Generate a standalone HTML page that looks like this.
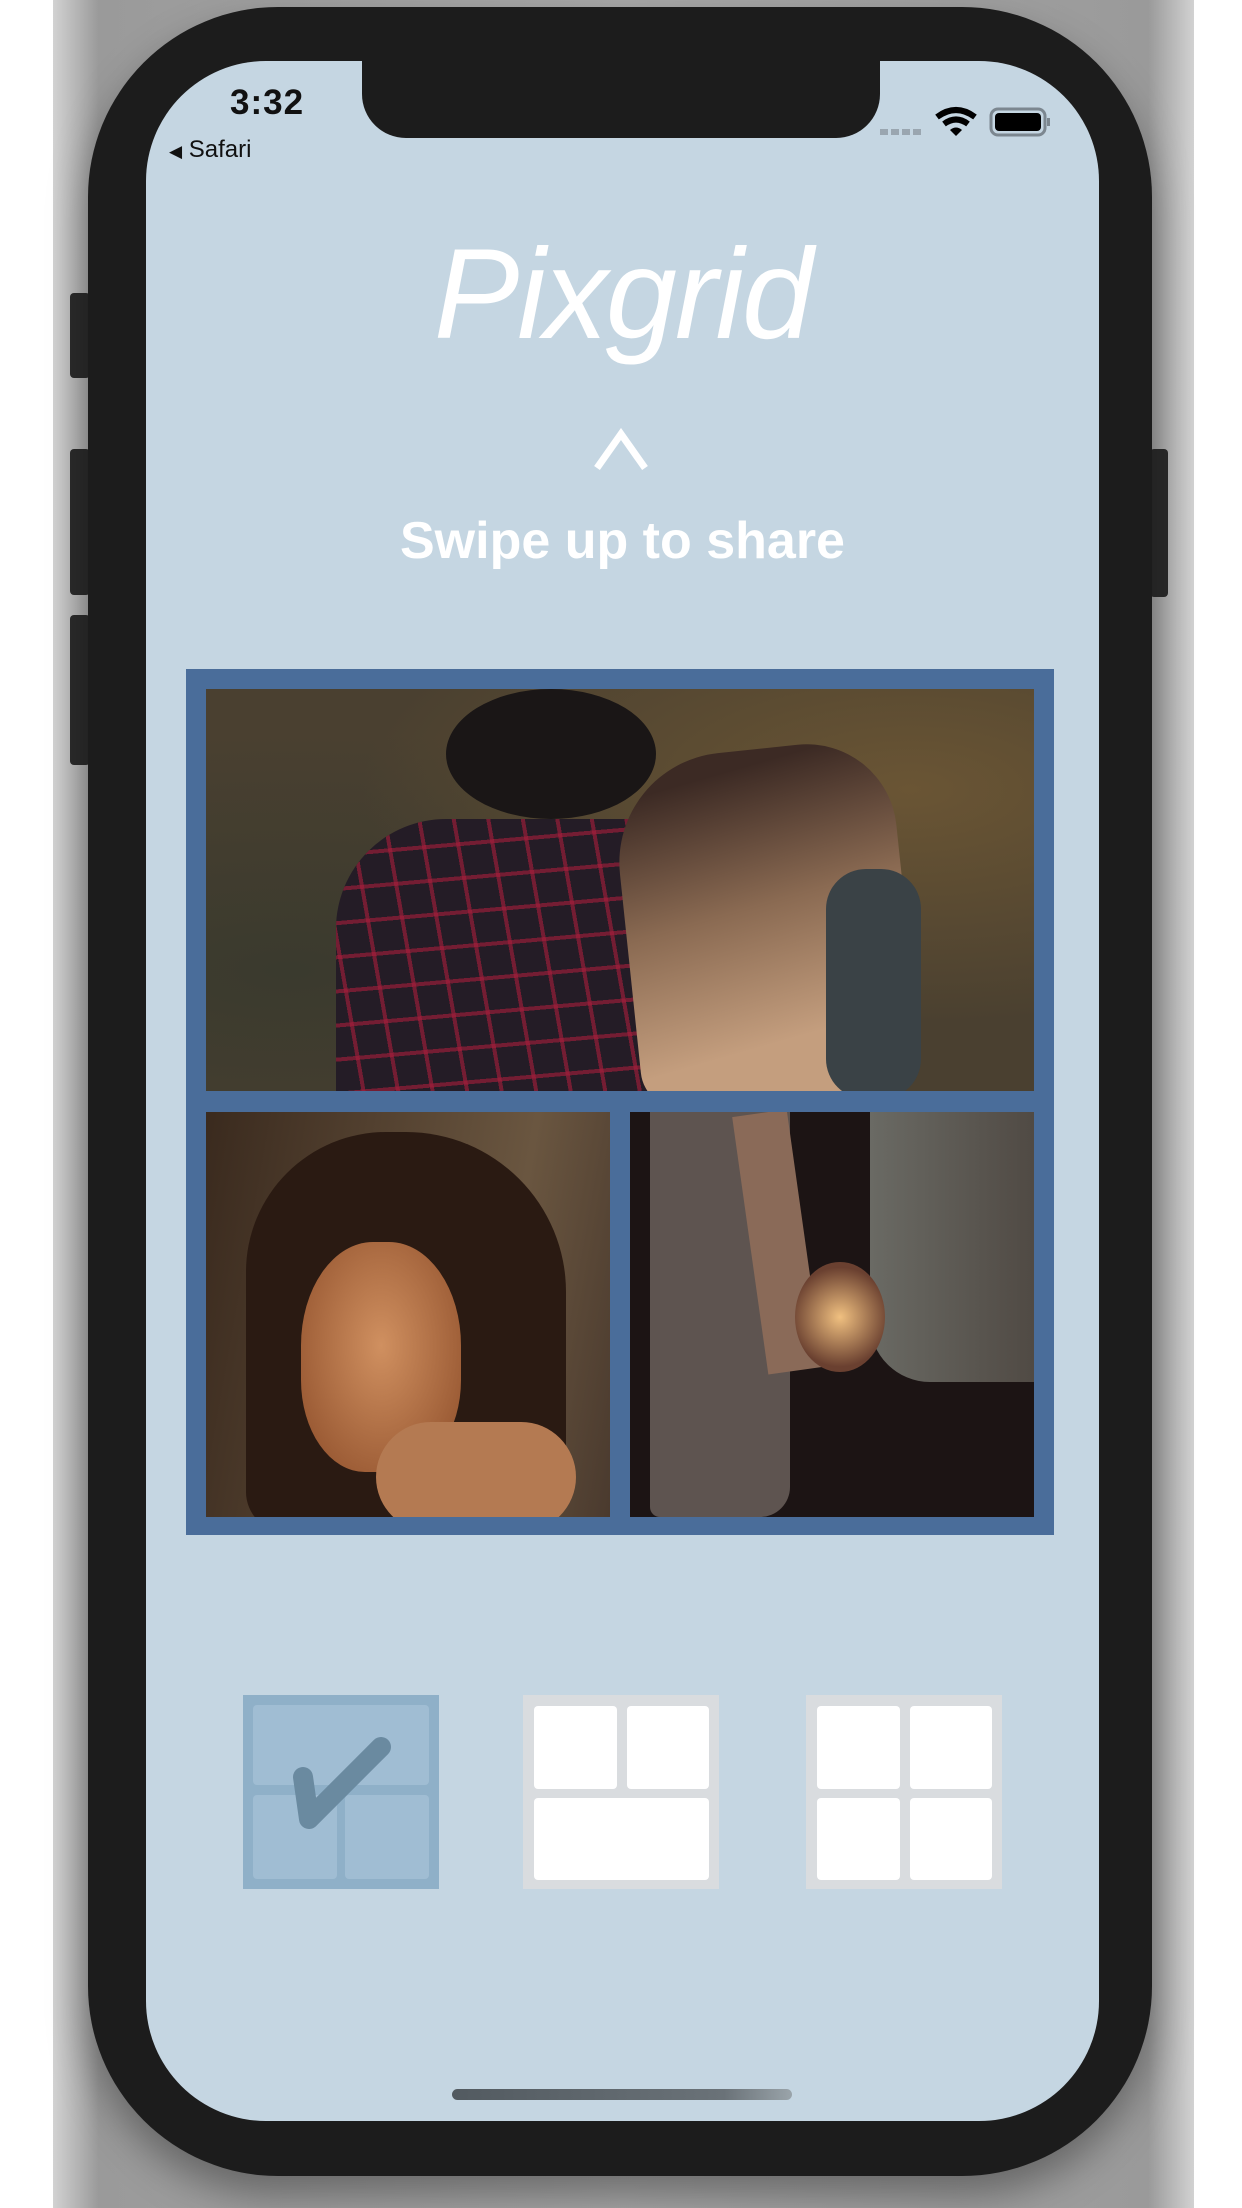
<!DOCTYPE html>
<html><head><meta charset="utf-8">
<style>
*{margin:0;padding:0;box-sizing:border-box}
html,body{width:1242px;height:2208px;overflow:hidden;background:#fff;font-family:"Liberation Sans",sans-serif}
.band{position:absolute;left:53px;top:0;width:1141px;height:2208px;background:linear-gradient(90deg,#d2d2d2 0%,#9a9a9a 4%,#a8a8a8 50%,#9a9a9a 96%,#d2d2d2 100%)}
.btn{position:absolute;background:#2b2b2b;border-radius:4px}
.phone{position:absolute;left:88px;top:7px;width:1064px;height:2169px;background:#1c1c1c;border-radius:190px;box-shadow:0 20px 40px rgba(0,0,0,.35)}
.screen{position:absolute;left:146px;top:61px;width:953px;height:2060px;background:#c5d6e2;border-radius:120px;overflow:hidden}
.notch{position:absolute;left:216px;top:-2px;width:518px;height:79px;background:#1c1c1c;border-radius:0 0 44px 44px}
.abs{position:absolute}
.photo{position:absolute;overflow:hidden}
.cell{position:absolute;border-radius:4px}
</style></head><body>
<div class="band"></div>
<div class="btn" style="left:70px;top:293px;width:20px;height:85px"></div>
<div class="btn" style="left:70px;top:449px;width:20px;height:146px"></div>
<div class="btn" style="left:70px;top:615px;width:20px;height:150px"></div>
<div class="btn" style="left:1150px;top:449px;width:18px;height:148px"></div>
<div class="phone"></div>
<div class="screen">
  <div class="notch"></div>
  <div class="abs" style="left:84px;top:22px;font-size:35px;font-weight:bold;color:#111;letter-spacing:1px">3:32</div>
  <div class="abs" style="left:23px;top:75px;font-size:24px;color:#111"><span style="font-size:17px">◀</span> Safari</div>
  <svg class="abs" style="left:734px;top:44px" width="170" height="35" viewBox="0 0 170 35">
    <g fill="#9aa6b0"><rect x="0" y="24" width="8" height="6"/><rect x="11" y="24" width="8" height="6"/><rect x="22" y="24" width="8" height="6"/><rect x="33" y="24" width="8" height="6"/></g>
    <path d="M57 12 Q76 -2 95 12" stroke="#000" stroke-width="6" fill="none"/>
    <path d="M64 19 Q76 10 88 19" stroke="#000" stroke-width="6" fill="none"/>
    <path d="M70 25 L76 31 L82 25 Q76 20 70 25Z" fill="#000"/>
    <rect x="111" y="4" width="54" height="26" rx="7" fill="none" stroke="#7c8790" stroke-width="3"/>
    <rect x="115" y="8" width="46" height="18" rx="4" fill="#000"/>
    <rect x="167" y="13" width="3" height="8" fill="#7c8790"/>
  </svg>
  <div class="abs" style="left:0;width:953px;top:170px;text-align:center;font-family:'Liberation Sans',sans-serif;font-style:italic;font-size:128px;color:#fff;line-height:1;letter-spacing:-2px">Pixgrid</div>
  <svg class="abs" style="left:447px;top:367px" width="56" height="44" viewBox="0 0 56 44"><path d="M4 40 L28 6 L52 40" stroke="#fff" stroke-width="7" fill="none"/></svg>
  <div class="abs" style="left:0;width:953px;top:450px;text-align:center;font-size:52px;font-weight:bold;color:#fff">Swipe up to share</div>

  <div class="abs" style="left:40px;top:608px;width:868px;height:866px;background:#4a6d9a"></div>
  <div class="photo" style="left:60px;top:628px;width:828px;height:402px;background:radial-gradient(ellipse at 85% 25%,#6a5534,transparent 55%),radial-gradient(ellipse at 10% 70%,#3a3a2e,transparent 60%),#4a4030">
    <div class="abs" style="left:130px;top:130px;width:470px;height:300px;background:#241c26;border-radius:110px 110px 0 0"></div>
    <div class="abs" style="left:130px;top:130px;width:470px;height:300px;border-radius:110px 110px 0 0;background:repeating-linear-gradient(80deg,transparent 0 30px,rgba(170,30,60,.6) 30px 34px),repeating-linear-gradient(-5deg,transparent 0 30px,rgba(170,30,60,.6) 30px 34px)"></div>
    <div class="abs" style="left:420px;top:60px;width:280px;height:350px;background:linear-gradient(170deg,#3c2a24 10%,#8a6a52 45%,#c49e7e 80%);border-radius:110px 90px 60px 40px;transform:rotate(-6deg)"></div>
    <div class="abs" style="left:620px;top:180px;width:95px;height:230px;background:#3a4246;border-radius:40px"></div>
    <div class="abs" style="left:240px;top:0;width:210px;height:130px;background:#1a1616;border-radius:50%"></div>
  </div>
  <div class="photo" style="left:60px;top:1051px;width:404px;height:405px;background:linear-gradient(100deg,#3a2a1e,#6a5640 70%,#4a3a2e)">
    <div class="abs" style="left:40px;top:20px;width:320px;height:400px;background:#2a1a12;border-radius:140px 160px 40px 40px"></div>
    <div class="abs" style="left:95px;top:130px;width:160px;height:230px;background:radial-gradient(ellipse at 50% 45%,#d09060,#9a5a34 80%);border-radius:45% 45% 40% 40%"></div>
    <div class="abs" style="left:170px;top:310px;width:200px;height:110px;background:#b47a52;border-radius:60px"></div>
  </div>
  <div class="photo" style="left:484px;top:1051px;width:404px;height:405px;background:#1c1414">
    <div class="abs" style="left:20px;top:0;width:140px;height:405px;background:#5e5450;border-radius:0 0 30px 10px"></div>
    <div class="abs" style="left:240px;top:0;width:164px;height:270px;background:linear-gradient(90deg,#6a6a64,#504a44);border-radius:0 0 0 60px"></div>
    <div class="abs" style="left:120px;top:0;width:55px;height:260px;background:#8a6a58;transform:rotate(-8deg)"></div>
    <div class="abs" style="left:165px;top:150px;width:90px;height:110px;background:radial-gradient(circle,#f0c080,#6a4030 70%);border-radius:50%"></div>
  </div>

  <div class="abs" style="left:97px;top:1634px;width:196px;height:194px;background:#8fb0c8">
    <div class="cell" style="left:10px;top:10px;width:176px;height:80px;background:#a0bdd3"></div>
    <div class="cell" style="left:10px;top:100px;width:84px;height:84px;background:#a0bdd3"></div>
    <div class="cell" style="left:102px;top:100px;width:84px;height:84px;background:#a0bdd3"></div>
    <svg class="abs" style="left:0;top:0" width="196" height="194" viewBox="0 0 196 194"><path d="M60 82 L66 124 L138 52" stroke="#6a8aa0" stroke-width="20" stroke-linecap="round" stroke-linejoin="round" fill="none"/></svg>
  </div>
  <div class="abs" style="left:377px;top:1634px;width:196px;height:194px;background:#d9dcdf">
    <div class="cell" style="left:11px;top:11px;width:83px;height:83px;background:#fff"></div>
    <div class="cell" style="left:104px;top:11px;width:82px;height:83px;background:#fff"></div>
    <div class="cell" style="left:11px;top:103px;width:175px;height:82px;background:#fff"></div>
  </div>
  <div class="abs" style="left:660px;top:1634px;width:196px;height:194px;background:#d9dcdf">
    <div class="cell" style="left:11px;top:11px;width:83px;height:83px;background:#fff"></div>
    <div class="cell" style="left:104px;top:11px;width:82px;height:83px;background:#fff"></div>
    <div class="cell" style="left:11px;top:103px;width:83px;height:82px;background:#fff"></div>
    <div class="cell" style="left:104px;top:103px;width:82px;height:82px;background:#fff"></div>
  </div>
  <div class="abs" style="left:306px;top:2028px;width:340px;height:11px;border-radius:6px;background:linear-gradient(90deg,#525a60,#6a7278 80%,#9aa4aa)"></div>
</div>
</body></html>
